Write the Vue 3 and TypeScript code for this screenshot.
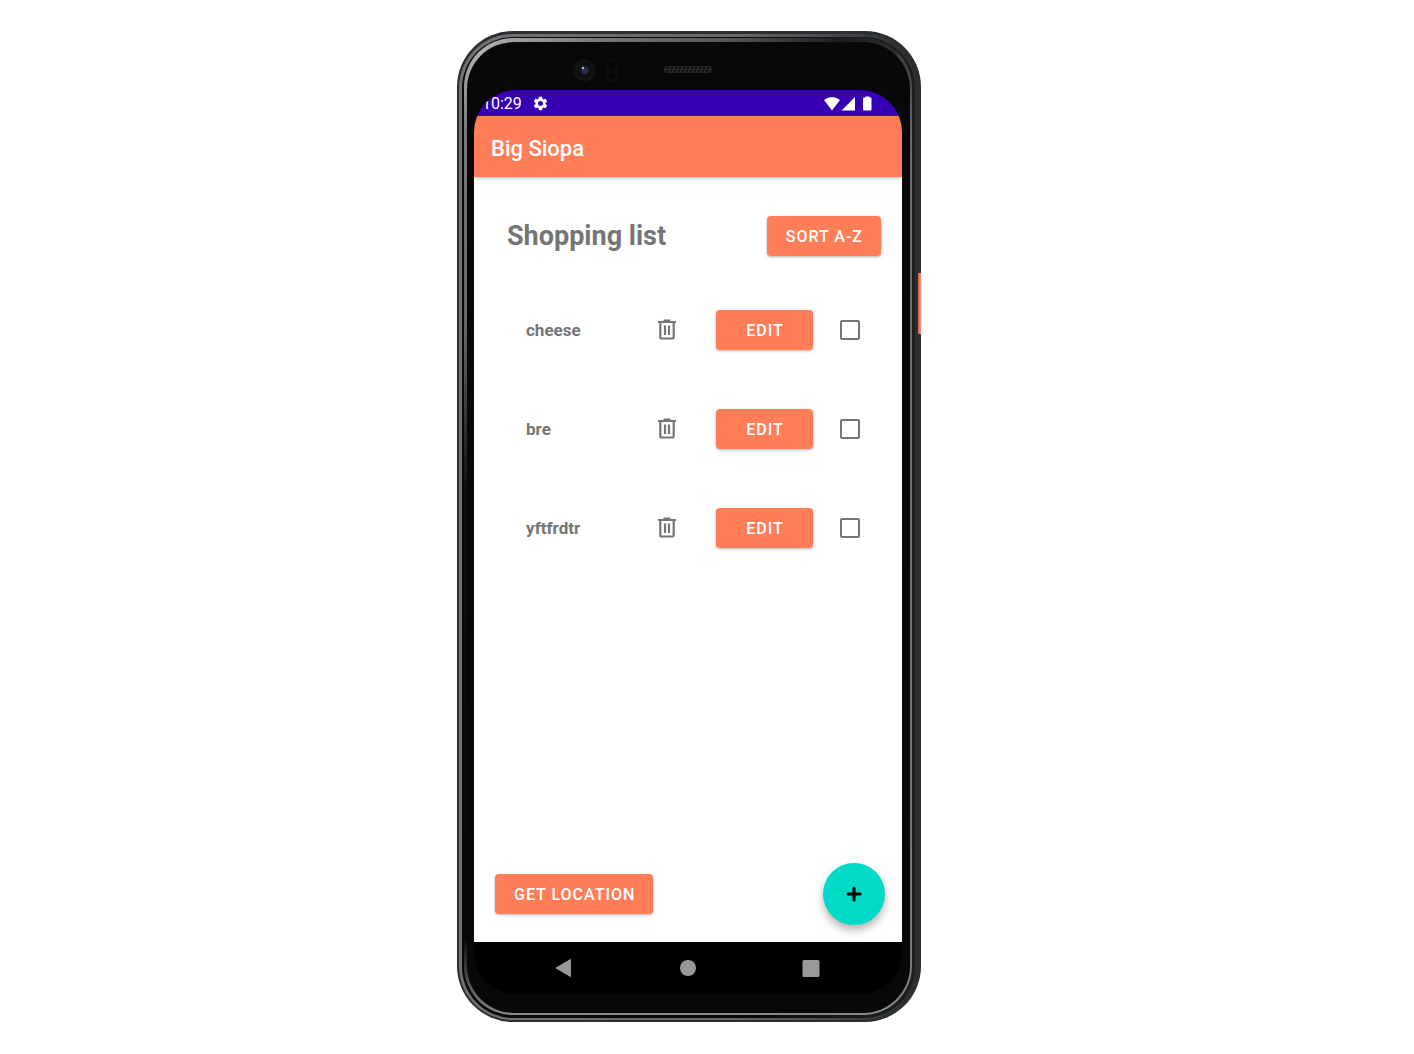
<script setup lang="ts">
import { ref } from 'vue'

interface Item {
  id: number
  name: string
  done: boolean
}

const items = ref<Item[]>([
  { id: 1, name: 'cheese', done: false },
  { id: 2, name: 'bre', done: false },
  { id: 3, name: 'yftfrdtr', done: false },
])

function remove(id: number) {
  items.value = items.value.filter((item) => item.id !== id)
}

function sortItems() {
  items.value.sort((a, b) => a.name.localeCompare(b.name))
}
</script>

<template>
  <div class="page">
    <div class="phone">
      <div class="rim rim-outer"></div>
      <div class="rim rim-dark"></div>
      <div class="rim rim-light"></div>
      <div class="rim glass"></div>
      <div class="power"></div>

      <div class="forehead">
        <svg class="sensors" viewBox="0 0 160 30" width="160" height="30" aria-hidden="true">
          <circle cx="20.500" cy="15.500" r="11" fill="#121213" />
          <circle cx="20.500" cy="15.500" r="7" fill="#0c0c12" />
          <circle cx="20.500" cy="15" r="5" fill="#1a1c2a" />
          <circle cx="21" cy="16" r="3" fill="#2c3050" />
          <circle cx="19" cy="13" r="1.200" fill="#b4b6c8" />
          <rect x="43" y="4" width="10" height="22" rx="5" fill="#0c0c0d" stroke="#131315" />
          <circle cx="48" cy="9" r="3.500" fill="#060608" />
          <circle cx="48" cy="21" r="3.500" fill="#060608" />
          <rect x="100" y="11" width="48" height="7" rx="3" fill="#262627" />
          <path d="M103 13h43M102 16h45" stroke="#0c0c0d" stroke-width="1.500" stroke-dasharray="2 2" />
        </svg>
      </div>

      <div class="screen">
        <div class="status">
          <span class="time">10:29</span>
          <svg class="gear" viewBox="0 0 24 24" width="17" height="17" aria-hidden="true">
            <path fill="#fff" d="M19.140 12.940c.04-.3.060-.61.060-.94 0-.32-.02-.64-.07-.94l2.030-1.580a.49.49 0 0 0 .12-.61l-1.920-3.320a.488.488 0 0 0-.59-.22l-2.390.96c-.5-.38-1.030-.7-1.620-.94l-.36-2.540a.484.484 0 0 0-.48-.41h-3.840c-.24 0-.43.17-.47.41l-.36 2.540c-.59.24-1.130.57-1.620.94l-2.390-.96c-.22-.08-.47 0-.59.22L2.740 8.870c-.12.21-.08.47.12.61l2.030 1.580c-.05.3-.09.63-.09.94s.02.64.07.94l-2.030 1.580a.49.49 0 0 0-.12.61l1.920 3.320c.12.22.37.29.59.22l2.390-.96c.5.38 1.030.7 1.620.94l.36 2.540c.05.24.24.41.48.41h3.840c.24 0 .44-.17.47-.41l.36-2.540c.59-.24 1.130-.56 1.620-.94l2.390.96c.22.08.47 0 .59-.22l1.920-3.320c.12-.22.07-.47-.12-.61l-2.010-1.580zM12 15.600c-1.980 0-3.600-1.620-3.600-3.600s1.620-3.600 3.600-3.600 3.600 1.620 3.600 3.600-1.620 3.600-3.600 3.600z" />
          </svg>
          <svg class="signals" viewBox="0 0 50 16" width="50" height="16" aria-hidden="true">
            <path fill="#fff" d="M0 4Q8 -2 16 4L8 14.500zM17.500 14.500L31 1V14.500zM39 2.500q0-1 1-1H41.500V.5h4v1h1q1 0 1 1v11q0 1-1 1h-6.500q-1 0-1-1z" />
          </svg>
        </div>

        <header class="bar">
          <h1>Big Siopa</h1>
        </header>

        <main class="content">
          <div class="heading">
            <h2>Shopping list</h2>
            <button class="btn" type="button" @click="sortItems">SORT A-Z</button>
          </div>

          <ul class="list">
            <li v-for="item in items" :key="item.id" class="row">
              <label class="name" :for="`item-${item.id}`">{{ item.name }}</label>
              <button class="trash" type="button" :aria-label="`Delete ${item.name}`" @click="remove(item.id)">
                <svg viewBox="0 0 20 22" width="20" height="22" aria-hidden="true">
                  <path d="M1 2H6.500V1Q6.500 .5 7 .5H13Q13.500 .5 13.500 1V2H19V4H1z" fill="#757575" />
                  <path d="M3.300 3V18Q3.300 19.500 4.500 19.500H15.500Q16.700 19.500 16.700 18V3M8 6.500V16M12 6.500V16" fill="none" stroke="#757575" stroke-width="2.200" />
                </svg>
              </button>
              <button class="btn edit" type="button">EDIT</button>
              <input :id="`item-${item.id}`" v-model="item.done" class="check" type="checkbox" />
            </li>
          </ul>

          <div class="actions">
            <button class="btn" type="button">GET LOCATION</button>
            <button class="fab" type="button" aria-label="Add item">
              <svg viewBox="0 0 16 16" width="16" height="16" aria-hidden="true">
                <path d="M8 2V14M2 8H14" stroke="#000" stroke-width="3" stroke-linecap="round" />
              </svg>
            </button>
          </div>
        </main>

        <nav class="nav" aria-label="System">
          <button type="button" aria-label="Back">
            <svg viewBox="0 0 18 20" width="18" height="20"><path d="M2 10L16.500 1.500V18.500z" fill="#999" stroke="#999" stroke-linejoin="round" /></svg>
          </button>
          <button type="button" aria-label="Home">
            <svg viewBox="0 0 18 20" width="18" height="20"><circle cx="10" cy="10" r="8" fill="#999" /></svg>
          </button>
          <button type="button" aria-label="Recent apps">
            <svg viewBox="0 0 18 20" width="18" height="20"><rect x="0.500" y="2" width="17" height="17" rx="1.500" fill="#999" /></svg>
          </button>
        </nav>
      </div>
    </div>
  </div>
</template>

<style>
body {
  background: #fff;
}
</style>

<style scoped>
* {
  box-sizing: border-box;
}

.page {
  min-height: 100vh;
  padding: 31px 36px 32px 0;
  display: flex;
  justify-content: center;
  font-family: Roboto, "Liberation Sans", sans-serif;
}

.phone {
  position: relative;
  width: 100%;
  max-width: 464px;
  padding: 0 19px 28px 17px;
  display: flex;
  flex-direction: column;
  border-radius: 56px;
  background: #2c2e30;
}

.rim {
  position: absolute;
  pointer-events: none;
}

.rim-outer {
  inset: 3px 4px 2px 2px;
  border-radius: 54px;
  background: linear-gradient(90deg, #707376, #66686b 60%, #2c2f31 98%);
}

.rim-dark {
  inset: 6px 6px 4px 5px;
  border-radius: 51px;
  background: linear-gradient(90deg, #08080a 60%, #1c1f20);
}

.rim-light {
  inset: 7px 9px 7px 7px;
  border-radius: 49px;
  background:
    linear-gradient(90deg, #b8b8b8, #777 30%, #555 60%, #1c1c1e 84%, #333) top / 100% 16px no-repeat,
    linear-gradient(180deg, #b8b8b8, #777 10%, #666 30%, #101012 46%, #08080a 92%, #888) left / 50% 100% no-repeat,
    linear-gradient(180deg, #333, #6a6a6c 10%, #77787a 94%, #888) right / 50% 100% no-repeat;
}

.glass {
  inset: 11px 11px 9px 10px;
  border-radius: 47px;
  background: #080709;
}

.power {
  position: absolute;
  top: 242px;
  right: 0;
  width: 3px;
  height: 61px;
  background: linear-gradient(90deg, #d9583c, #ff9c84);
}

.forehead {
  position: relative;
  height: 59px;
  padding: 24px 0 0 90px;
}

.sensors {
  display: block;
}

.screen {
  position: relative;
  flex: 1;
  display: flex;
  flex-direction: column;
  overflow: hidden;
  border-radius: 42px;
}

.status {
  height: 26px;
  padding: 1px 28px 0 8px;
  display: flex;
  align-items: center;
  background: #3700b3;
  color: #fff;
}

.time {
  font-size: 16px;
  line-height: 26px;
}

.gear {
  margin-left: 10px;
}

.signals {
  margin-left: auto;
}

.bar {
  position: relative;
  height: 61px;
  padding: 4px 17px 0;
  display: flex;
  align-items: center;
  background: #ff7d57;
  color: #fff;
  box-shadow: 0 1px 3px rgba(0, 0, 0, 0.3);
}

h1 {
  margin: 0;
  font-size: 22px;
  line-height: 28px;
  font-weight: 500;
}

.content {
  flex: 1;
  display: flex;
  flex-direction: column;
  padding: 39px 17px 17px 21px;
  background: #fff;
}

.heading {
  display: flex;
  align-items: center;
  justify-content: space-between;
  padding: 0 4px 0 12px;
}

h2 {
  margin: 0;
  font-size: 27px;
  line-height: 32px;
  font-weight: 700;
  color: #757575;
}

button {
  border: 0;
  padding: 0;
  background: none;
  font-family: inherit;
  cursor: pointer;
}

.btn {
  height: 40px;
  padding: 2px 18px 0 19px;
  border-radius: 4px;
  background: #ff7d57;
  color: #fff;
  font-size: 16px;
  line-height: 20px;
  font-weight: 500;
  letter-spacing: 1px;
  box-shadow: 0 1px 3px rgba(0, 0, 0, 0.3);
}

.list {
  margin: 24px 0 0;
  padding: 0 19px 0 31px;
  list-style: none;
}

.row {
  height: 99px;
  display: flex;
  align-items: center;
}

.name {
  flex: 1;
  font-size: 17px;
  line-height: 24px;
  font-weight: 700;
  color: #757575;
}

.trash {
  width: 20px;
  height: 22px;
}

.trash svg,
.fab svg,
.nav svg {
  display: block;
}

.edit {
  width: 97px;
  margin: 0 27px 0 39px;
}

.check {
  appearance: none;
  width: 20px;
  height: 20px;
  margin: 0 6px 0 0;
  border: 2px solid #757575;
  border-radius: 2px;
  background: #fff;
}

.check:checked {
  background: #00dac6;
}

.actions {
  margin-top: auto;
  display: flex;
  align-items: center;
  justify-content: space-between;
}

.fab {
  width: 62px;
  height: 62px;
  display: grid;
  place-items: center;
  border-radius: 50%;
  background: #00dac6;
  box-shadow: 0 5px 8px rgba(0, 0, 0, 0.3);
}

.nav {
  height: 52px;
  padding: 0 82px 0 80px;
  display: flex;
  align-items: center;
  justify-content: space-between;
  background: #000;
}
</style>
